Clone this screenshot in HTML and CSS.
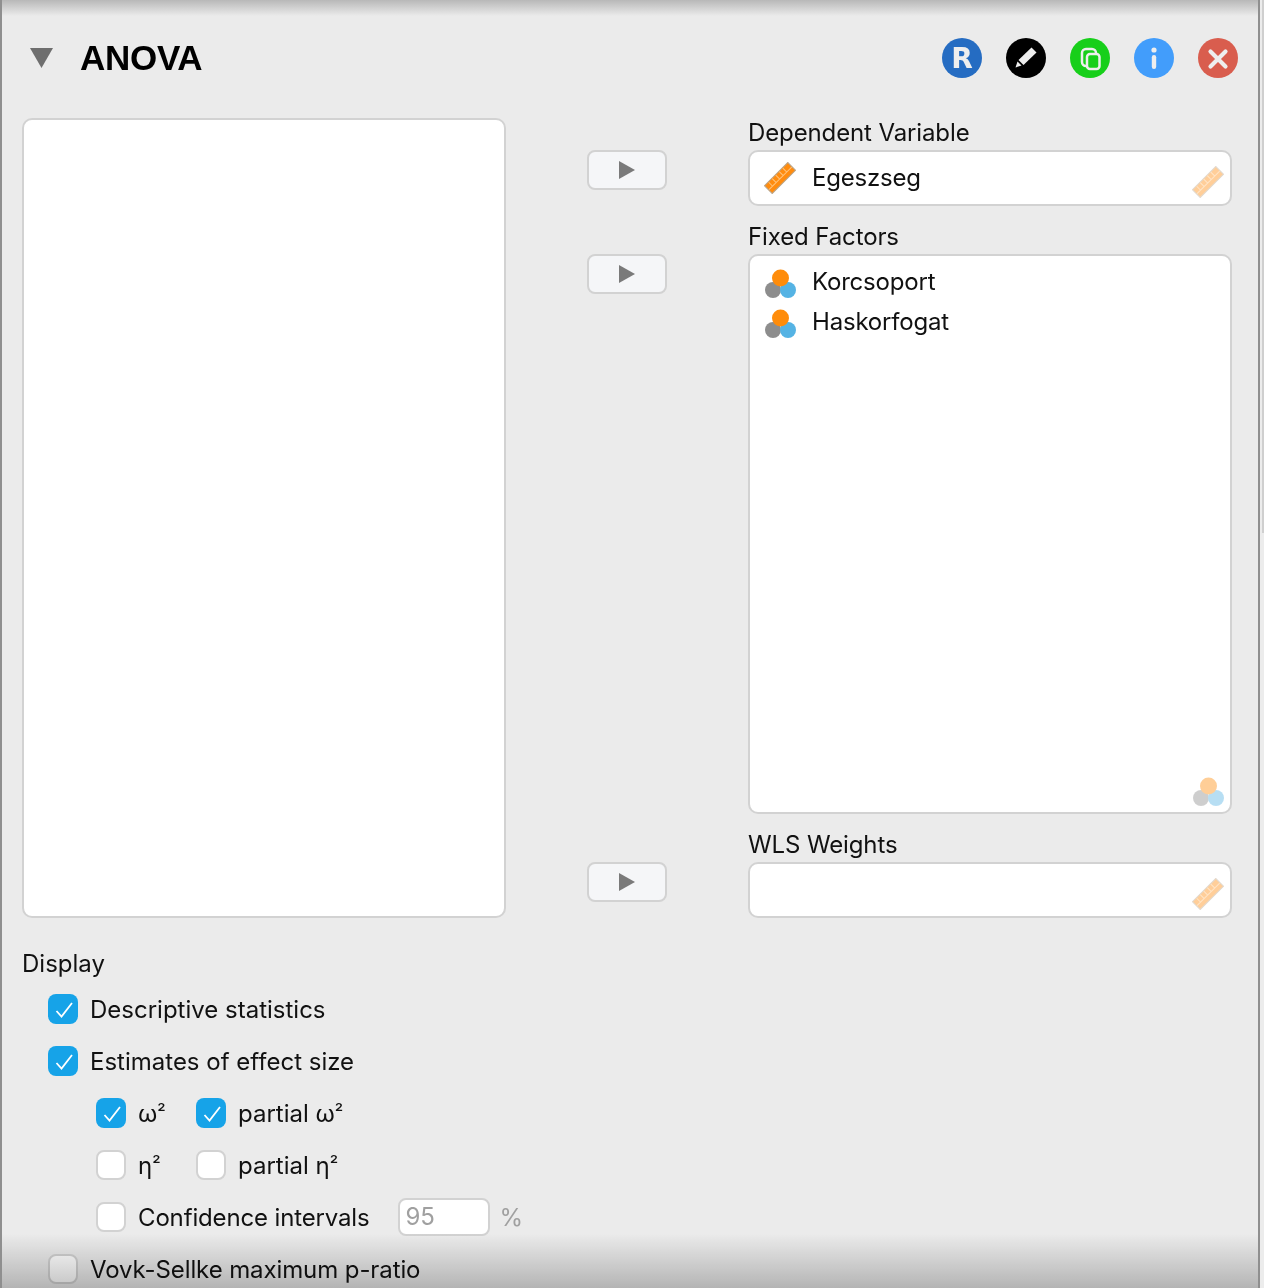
FILE: index.html
```html
<!DOCTYPE html>
<html lang="en">
<head>
    <meta charset="UTF-8">
    <title>ANOVA</title>
    <link rel="stylesheet" href="styles.css">
</head>
<body>
    <svg class="defs" width="0" height="0">
        <symbol id="ruler" viewBox="0 0 32 32">
            <g transform="rotate(-45 16 16)">
                <rect x="-0.5" y="10.5" width="33" height="11" fill="#ff8c0f" stroke="#b9a58c" stroke-width="1"/>
                <path d="M5 11v6M10 11v6M15 11v6M20 11v6M25 11v6M0 16.5h32" stroke="#ffc27a" stroke-width="1" fill="none"/>
            </g>
        </symbol>
        <symbol id="nominal" viewBox="0 0 32 32">
            <circle cx="9" cy="24" r="8" fill="#8d8d8d"/>
            <circle cx="24" cy="24" r="8" fill="#55b3e4"/>
            <circle cx="16.5" cy="12" r="8.5" fill="#ff8c0a"/>
        </symbol>
    </svg>

    <div class="panel">
        <div class="header">
            <div class="header-left">
                <svg class="collapse" width="23" height="20" viewBox="0 0 23 20"><polygon points="0,0 23,0 11.5,20" fill="#6e6e6e"/></svg>
                <h1 class="title">ANOVA</h1>
            </div>
            <div class="header-icons">
                <span class="round-icon icon-r">R</span>
                <span class="round-icon icon-edit">
                    <svg width="40" height="40" viewBox="0 0 40 40">
                        <path d="M25.5 9.5l5 5-13 12.5-5-5z" fill="#eee"/>
                        <path d="M11.5 23.5l4 4-6 2z" fill="#eee"/>
                    </svg>
                </span>
                <span class="round-icon icon-copy">
                    <svg width="40" height="40" viewBox="0 0 40 40">
                        <rect x="12" y="11" width="14" height="17" rx="4" fill="none" stroke="#eee" stroke-width="2.5"/>
                        <rect x="17" y="16" width="12.5" height="15" rx="3" fill="#17cf1a" stroke="#eee" stroke-width="2.5"/>
                    </svg>
                </span>
                <span class="round-icon icon-info">
                    <svg width="40" height="40" viewBox="0 0 40 40">
                        <circle cx="20" cy="12" r="2.6" fill="#eee"/>
                        <rect x="17.8" y="17" width="4.4" height="14" rx="2.2" fill="#eee"/>
                    </svg>
                </span>
                <span class="round-icon icon-close">
                    <svg width="40" height="40" viewBox="0 0 40 40">
                        <path d="M12.5 13.5l15 15M27.5 13.5l-15 15" stroke="#eee" stroke-width="4.2" stroke-linecap="round"/>
                    </svg>
                </span>
            </div>
        </div>

        <div class="assign">
            <div class="list source-list"></div>

            <div class="arrow-cell"><button class="arrow-btn"><span class="arrow"></span></button></div>
            <div class="target">
                <div class="target-label">Dependent Variable</div>
                <div class="list single">
                    <div class="var-row">
                        <svg class="var-icon"><use href="#ruler"/></svg>
                        <span>Egeszseg</span>
                    </div>
                    <svg class="type-hint"><use href="#ruler"/></svg>
                </div>
            </div>

            <div class="arrow-cell"><button class="arrow-btn"><span class="arrow"></span></button></div>
            <div class="target">
                <div class="target-label">Fixed Factors</div>
                <div class="list factors">
                    <div class="var-row">
                        <svg class="var-icon"><use href="#nominal"/></svg>
                        <span>Korcsoport</span>
                    </div>
                    <div class="var-row">
                        <svg class="var-icon"><use href="#nominal"/></svg>
                        <span>Haskorfogat</span>
                    </div>
                    <svg class="type-hint"><use href="#nominal"/></svg>
                </div>
            </div>

            <div class="arrow-cell"><button class="arrow-btn"><span class="arrow"></span></button></div>
            <div class="target">
                <div class="target-label">WLS Weights</div>
                <div class="list single">
                    <svg class="type-hint"><use href="#ruler"/></svg>
                </div>
            </div>
        </div>

        <div class="display">
            <div class="group-title">Display</div>
            <div class="options">
                <label class="option"><span class="check on"><svg viewBox="0 0 30 30"><path d="M8.5 17l5 5.5L24 9" fill="none" stroke="#fff" stroke-width="1.8"/></svg></span>Descriptive statistics</label>
                <label class="option"><span class="check on"><svg viewBox="0 0 30 30"><path d="M8.5 17l5 5.5L24 9" fill="none" stroke="#fff" stroke-width="1.8"/></svg></span>Estimates of effect size</label>
                <div class="sub-options">
                    <label class="option"><span class="check on"><svg viewBox="0 0 30 30"><path d="M8.5 17l5 5.5L24 9" fill="none" stroke="#fff" stroke-width="1.8"/></svg></span><span>ω<span class="square">²</span></span></label>
                    <label class="option"><span class="check on"><svg viewBox="0 0 30 30"><path d="M8.5 17l5 5.5L24 9" fill="none" stroke="#fff" stroke-width="1.8"/></svg></span><span>partial ω<span class="square">²</span></span></label>
                    <label class="option"><span class="check"></span><span>η<span class="square">²</span></span></label>
                    <label class="option"><span class="check"></span><span>partial η<span class="square">²</span></span></label>
                    <div class="option ci-row">
                        <span class="check"></span>Confidence intervals
                        <span class="ci-input">95</span>
                        <span class="ci-unit">%</span>
                    </div>
                </div>
                <label class="option tight"><span class="check"></span>Vovk-Sellke maximum p-ratio</label>
            </div>
        </div>

        <div class="shade-top"></div>
        <div class="shade-bottom"></div>
    </div>
    <div class="scrollbar"></div>
</body>
</html>
```

FILE: styles.css
```css
* {
    box-sizing: border-box;
}

html, body {
    margin: 0;
    height: 100%;
}

body {
    background: #ececec;
    font-family: "Inter", "Liberation Sans", sans-serif;
    font-size: 24px;
    color: #111;
    overflow: hidden;
}

.defs {
    position: absolute;
}

.panel {
    position: relative;
    width: 1260px;
    height: 1288px;
    background: #ebebeb;
    border-left: 2px solid #8f8f8f;
    border-right: 2px solid #8f8f8f;
    overflow: hidden;
    padding: 38px 20px 0 20px;
}

.scrollbar {
    position: absolute;
    top: 0;
    right: 0;
    width: 2px;
    height: 533px;
    background: #cfcfcf;
}

/* header */
.header {
    display: flex;
    justify-content: space-between;
    align-items: center;
    height: 40px;
}

.header-left {
    display: flex;
    align-items: center;
    gap: 27px;
    padding-left: 8px;
}

.collapse {
    display: block;
}

.title {
    margin: 0;
    font-family: "Liberation Sans", sans-serif;
    font-size: 35px;
    font-weight: bold;
    letter-spacing: -0.3px;
    color: #000;
}

.header-icons {
    display: flex;
    gap: 24px;
}

.round-icon {
    display: flex;
    align-items: center;
    justify-content: center;
    width: 40px;
    height: 40px;
    border-radius: 50%;
}

.icon-r {
    background: #256cc2;
    color: #eee;
    font-family: "DejaVu Sans", sans-serif;
    font-size: 28px;
    font-weight: bold;
}

.icon-edit {
    background: #000;
}

.icon-copy {
    background: #17cf1a;
}

.icon-info {
    background: #429dfb;
}

.icon-close {
    background: #d95d4e;
}

/* variable assignment */
.assign {
    display: grid;
    grid-template-columns: 484px 242px 484px;
    grid-template-rows: 88px 592px 88px;
    row-gap: 16px;
    margin-top: 40px;
}

.list {
    position: relative;
    background: #fff;
    border: 2px solid #d2d2d2;
    border-radius: 10px;
}

.source-list {
    grid-column: 1;
    grid-row: 1 / 4;
}

.arrow-cell {
    grid-column: 2;
    display: flex;
    justify-content: center;
    padding-top: 32px;
    padding-right: 1px;
}

.arrow-btn {
    display: flex;
    align-items: center;
    justify-content: center;
    width: 80px;
    height: 40px;
    padding: 0;
    background: #f5f6f8;
    border: 2px solid #d2d2d2;
    border-radius: 8px;
}

.arrow {
    width: 0;
    height: 0;
    border-left: 16px solid #7a7a7a;
    border-top: 9px solid transparent;
    border-bottom: 9px solid transparent;
}

.target {
    grid-column: 3;
    display: flex;
    flex-direction: column;
}

.target-label {
    height: 32px;
    line-height: 30px;
    letter-spacing: -0.12px;
}

.list.single {
    height: 56px;
    padding-top: 6px;
}

.list.factors {
    flex: 1;
    padding-top: 6px;
}

.var-row {
    display: flex;
    align-items: center;
    gap: 16px;
    height: 40px;
    padding-left: 14px;
    letter-spacing: -0.2px;
}

.var-row span {
    padding-bottom: 1px;
}

.var-icon {
    width: 32px;
    height: 32px;
}

.type-hint {
    position: absolute;
    right: 6px;
    bottom: 6px;
    width: 32px;
    height: 32px;
    opacity: 0.42;
}

/* options */
.display {
    margin-top: 32px;
}

.group-title {
    height: 28px;
    line-height: 28px;
}

.options {
    display: flex;
    flex-direction: column;
    gap: 22px;
    margin-top: 16px;
    padding-left: 26px;
}

.option {
    display: flex;
    align-items: center;
    height: 30px;
    white-space: nowrap;
}

.option.tight {
    letter-spacing: -0.1px;
}

.square {
    font-size: 19px;
    line-height: 0;
    vertical-align: 3px;
}

.check {
    flex: none;
    width: 30px;
    height: 30px;
    margin-right: 12px;
    background: #fff;
    border: 2px solid #d2d2d2;
    border-radius: 8px;
}

.check.on {
    background: #16a3e8;
    border: 0;
}

.check svg {
    display: block;
}

.sub-options {
    display: grid;
    grid-template-columns: 100px auto;
    justify-content: start;
    gap: 22px 0;
    padding-left: 48px;
}

.ci-row {
    grid-column: 1 / 3;
    letter-spacing: -0.15px;
}

.ci-input {
    width: 92px;
    height: 38px;
    margin-left: 29px;
    padding-left: 5px;
    line-height: 34px;
    background: #fff;
    border: 2px solid #d2d2d2;
    border-radius: 8px;
    color: #a0a0a0;
}

.ci-unit {
    margin-left: 9px;
    color: #a0a0a0;
}

/* scroll shadows */
.shade-top {
    position: absolute;
    top: 0;
    left: 0;
    right: 0;
    height: 16px;
    background: linear-gradient(#b8b8b8, #ebebeb);
}

.shade-bottom {
    position: absolute;
    bottom: 0;
    left: 0;
    right: 0;
    height: 54px;
    background: linear-gradient(#fff, #c4c4c4);
    mix-blend-mode: multiply;
}
```
